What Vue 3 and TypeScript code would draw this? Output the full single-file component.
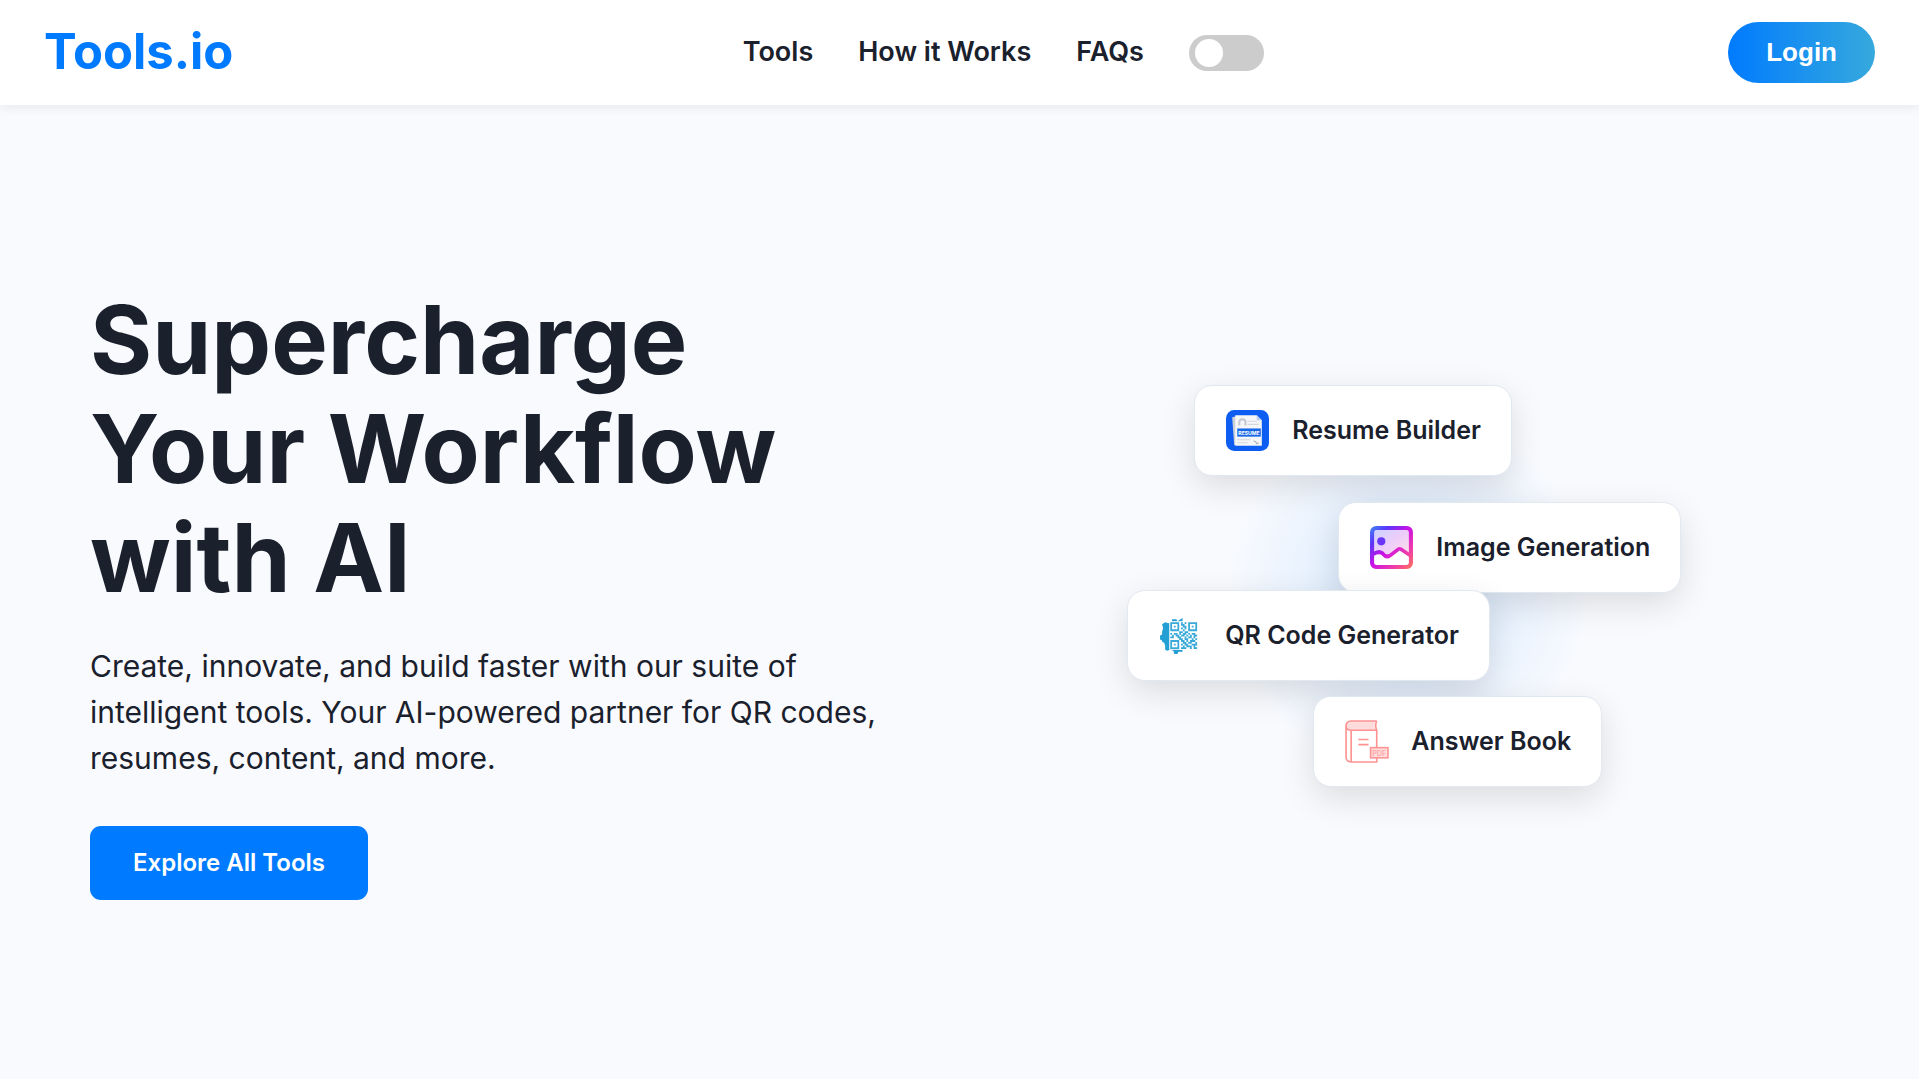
<script setup lang="ts">
import { ref } from 'vue'

interface NavLink {
  label: string
  href: string
}

interface ToolCard {
  id: 'resume' | 'image' | 'qr' | 'book'
  label: string
}

const links: NavLink[] = [
  { label: 'Tools', href: '#tools' },
  { label: 'How it Works', href: '#how-it-works' },
  { label: 'FAQs', href: '#faqs' },
]

const cards: ToolCard[] = [
  { id: 'resume', label: 'Resume Builder' },
  { id: 'image', label: 'Image Generation' },
  { id: 'qr', label: 'QR Code Generator' },
  { id: 'book', label: 'Answer Book' },
]

const dark = ref(false)

// Modules of the small QR symbol, one string per row.
const qrRows: string[] = [
  '111110101011111',
  '100010110010001',
  '101010011010101',
  '100010101010001',
  '111110010011111',
  '000001101100000',
  '101101011010110',
  '010110110101011',
  '110011001011010',
  '000001101100101',
  '111110110101110',
  '100010011011001',
  '101010101100111',
  '100010010111010',
  '111110111001011',
]

const qrPath: string = qrRows
  .map((row, y) =>
    [...row].map((cell, x) => (cell === '1' ? `M${x} ${y}h1v1h-1z` : '')).join(''),
  )
  .join('')
</script>

<template>
  <div class="page">
    <header class="header">
      <a class="logo" href="#">Tools.io</a>
      <nav class="nav" aria-label="Main">
        <a v-for="link in links" :key="link.href" class="nav-link" :href="link.href">{{ link.label }}</a>
        <input v-model="dark" class="switch" type="checkbox" aria-label="Dark mode" />
      </nav>
      <button class="login" type="button">Login</button>
    </header>

    <main class="hero">
      <section class="intro">
        <h1 class="title">Supercharge<br />Your Workflow<br />with AI</h1>
        <p class="lead">
          Create, innovate, and build faster with our suite of intelligent tools. Your AI-powered
          partner for QR codes, resumes, content, and more.
        </p>
        <button class="explore" type="button">Explore All Tools</button>
      </section>

      <section class="visual" aria-label="Featured tools">
        <div class="glow"></div>
        <div v-for="card in cards" :key="card.id" class="card" :class="card.id">
          <svg v-if="card.id === 'resume'" class="icon" viewBox="0 0 44 44" aria-hidden="true">
            <rect x="1" y="2" width="42" height="40" rx="8" fill="#0d5df2" />
            <path d="M7 9l4-1v28l-2 .5z" fill="#c9cfd8" />
            <path d="M10 7h21l5 5v25H10z" fill="#f5f6f8" />
            <path d="M31 7v5h5z" fill="#b9cdf3" />
            <path d="M14 17v-3a3 3 0 0 1 6 0v3" fill="none" stroke="#c3c8d0" stroke-width="2" />
            <path d="M22 13h9M22 16h11M12 31h13M12 34h10" stroke="#d4d8de" stroke-width="1" />
            <rect x="12" y="20" width="23" height="8" fill="#1768e8" />
            <text x="23.5" y="26" class="resume-text">RESUME</text>
            <path d="M28 32l2 1 1 2 2-1" fill="none" stroke="#aeb4bd" stroke-width="1" />
          </svg>
          <svg v-else-if="card.id === 'image'" class="icon" viewBox="0 0 44 44" aria-hidden="true">
            <defs>
              <linearGradient id="frame" x1="0" y1="0" x2="1" y2="1">
                <stop offset="0" stop-color="#3f8bf5" />
                <stop offset="0.22" stop-color="#5a35f8" />
                <stop offset="0.48" stop-color="#cb12e6" />
                <stop offset="0.75" stop-color="#f03cab" />
                <stop offset="1" stop-color="#ff7456" />
              </linearGradient>
              <linearGradient id="sky" x1="0" y1="0" x2="1" y2="1">
                <stop offset="0" stop-color="#c9d3ff" />
                <stop offset="0.5" stop-color="#edcdfa" />
                <stop offset="1" stop-color="#ffe0e8" />
              </linearGradient>
            </defs>
            <path d="M4 4h36v24l-9-6-12 8-8-4-8 4z" fill="url(#sky)" />
            <path
              d="M7 1h30a6 6 0 0 1 6 6v30a6 6 0 0 1-6 6H7a6 6 0 0 1-6-6V7a6 6 0 0 1 6-6zM7 5q-2 0-2 2v19q5-3 9 0l2 2q2 1 4 0l8-6q2-1 4 0l7 5V7q0-2-2-2zM5 30v7q0 2 2 2h30q2 0 2-2v-6l-9-6-8 6q-4 3-7 1l-3-3q-3-1-7 1z"
              fill="url(#frame)"
              fill-rule="evenodd"
            />
            <circle cx="12" cy="16" r="4" fill="#6a35f4" />
          </svg>
          <svg v-else-if="card.id === 'qr'" class="icon" viewBox="0 0 44 44" aria-hidden="true">
            <path
              d="M24 5v4h-3v3h-9v22h9v2h3v2h-4l-1 2h-3l-1-3-3-1-3 1-2-1v-4l-1-3-2-1v-1l-2-1v-4l2-1v-3l1-3-1-4 3-2 3 1 3-1 1-3h4l1 2z"
              fill="#249fd3"
            />
            <rect x="11" y="8" width="28" height="28" fill="#fff" />
            <g transform="translate(12 9) scale(1.75)">
              <path :d="qrPath" fill="#3aa9d8" />
            </g>
          </svg>
          <svg v-else class="icon" viewBox="0 0 44 44" aria-hidden="true">
            <path d="M6 2h25q-2 4 0 9H5q-4-1-4-4t5-5z" fill="#ffdcdc" />
            <path
              d="M32 2H7Q2 2 2 7v30q0 5 5 5h25V11M32 2q-2 4 0 9H7q-5 0-5-4M7 11v31M14 20h10M14 25h10"
              fill="none"
              stroke="#fd9292"
              stroke-width="1.6"
            />
            <rect x="26" y="28" width="17" height="10" fill="#ffdcdc" stroke="#fd9292" stroke-width="1.5" />
            <text x="34.5" y="36" class="pdf-text">PDF</text>
          </svg>
          <span>{{ card.label }}</span>
        </div>
      </section>
    </main>
  </div>
</template>

<style>
body {
  margin: 0;
  background: #f8fafe;
}
</style>

<style scoped>
.page {
  min-height: 100vh;
  display: flex;
  flex-direction: column;
  background: #f8fafe;
  color: #1a202c;
  font-family: Inter, sans-serif;
}

.header {
  display: flex;
  align-items: center;
  justify-content: space-between;
  padding: 22px 44px;
  background: #fff;
  box-shadow: 0 2px 11px rgba(0, 0, 0, 0.08);
}

.logo {
  padding-bottom: 2px;
  color: #007bff;
  font-size: 49px;
  line-height: 56px;
  font-weight: 700;
  text-decoration: none;
}

.nav {
  display: flex;
  align-items: center;
  gap: 45px;
  padding-left: 45px;
}

.nav-link {
  padding-bottom: 2px;
  color: inherit;
  font-size: 27px;
  line-height: 40px;
  font-weight: 600;
  text-decoration: none;
}

.switch {
  appearance: none;
  width: 75px;
  height: 36px;
  margin: 0;
  padding: 4px 6px;
  box-sizing: border-box;
  border-radius: 18px;
  background: #ccc;
  cursor: pointer;
}

.switch::before {
  content: '';
  display: block;
  width: 28px;
  height: 28px;
  border-radius: 50%;
  background: #fff;
}

.switch:checked {
  background: #007bff;
}

.switch:checked::before {
  margin-left: auto;
}

.login {
  padding: 0 38px;
  border: 0;
  border-radius: 31px;
  background: linear-gradient(90deg, #007bff, #36a9dd);
  color: #fff;
  font-family: 'Liberation Sans', sans-serif;
  font-size: 26px;
  line-height: 61px;
  font-weight: 700;
  cursor: pointer;
}

.hero {
  flex: 1;
  display: grid;
  grid-template-columns: 1fr 1fr;
  gap: 56px;
  align-items: center;
  padding: 0 90px;
}

.title {
  margin: 0 0 31px;
  font-size: 95px;
  line-height: 109px;
  font-weight: 700;
}

.lead {
  max-width: 820px;
  margin: 0 0 45px;
  font-size: 30px;
  line-height: 46px;
}

.explore {
  padding: 0 43px;
  border: 0;
  border-radius: 11px;
  background: #007bff;
  color: #fff;
  font-family: inherit;
  font-size: 24px;
  line-height: 74px;
  font-weight: 600;
  cursor: pointer;
}

.visual {
  position: relative;
  height: 506px;
}

.glow {
  position: absolute;
  inset: 0;
  background: radial-gradient(circle at center, rgba(0, 123, 255, 0.15), rgba(0, 123, 255, 0) 180px);
}

.card {
  position: absolute;
  display: flex;
  align-items: center;
  gap: 22px;
  padding: 22px 30px;
  border: 1px solid #e2e8f0;
  border-radius: 18px;
  background: #fff;
  box-shadow: 0 11px 34px rgba(0, 0, 0, 0.12);
  font-size: 25px;
  line-height: 45px;
  font-weight: 600;
  white-space: nowrap;
}

.resume {
  left: calc(50% - 214px);
  top: 46px;
}

.image {
  left: calc(50% - 70px);
  top: 163px;
}

.qr {
  left: calc(50% - 281px);
  top: 251px;
}

.book {
  left: calc(50% - 95px);
  top: 357px;
}

.icon {
  width: 45px;
  height: 45px;
}

.resume-text {
  font-size: 5px;
  font-weight: 700;
  text-anchor: middle;
  fill: #fff;
}

.pdf-text {
  font-size: 7px;
  font-weight: 400;
  text-anchor: middle;
  fill: #fd9292;
}
</style>
